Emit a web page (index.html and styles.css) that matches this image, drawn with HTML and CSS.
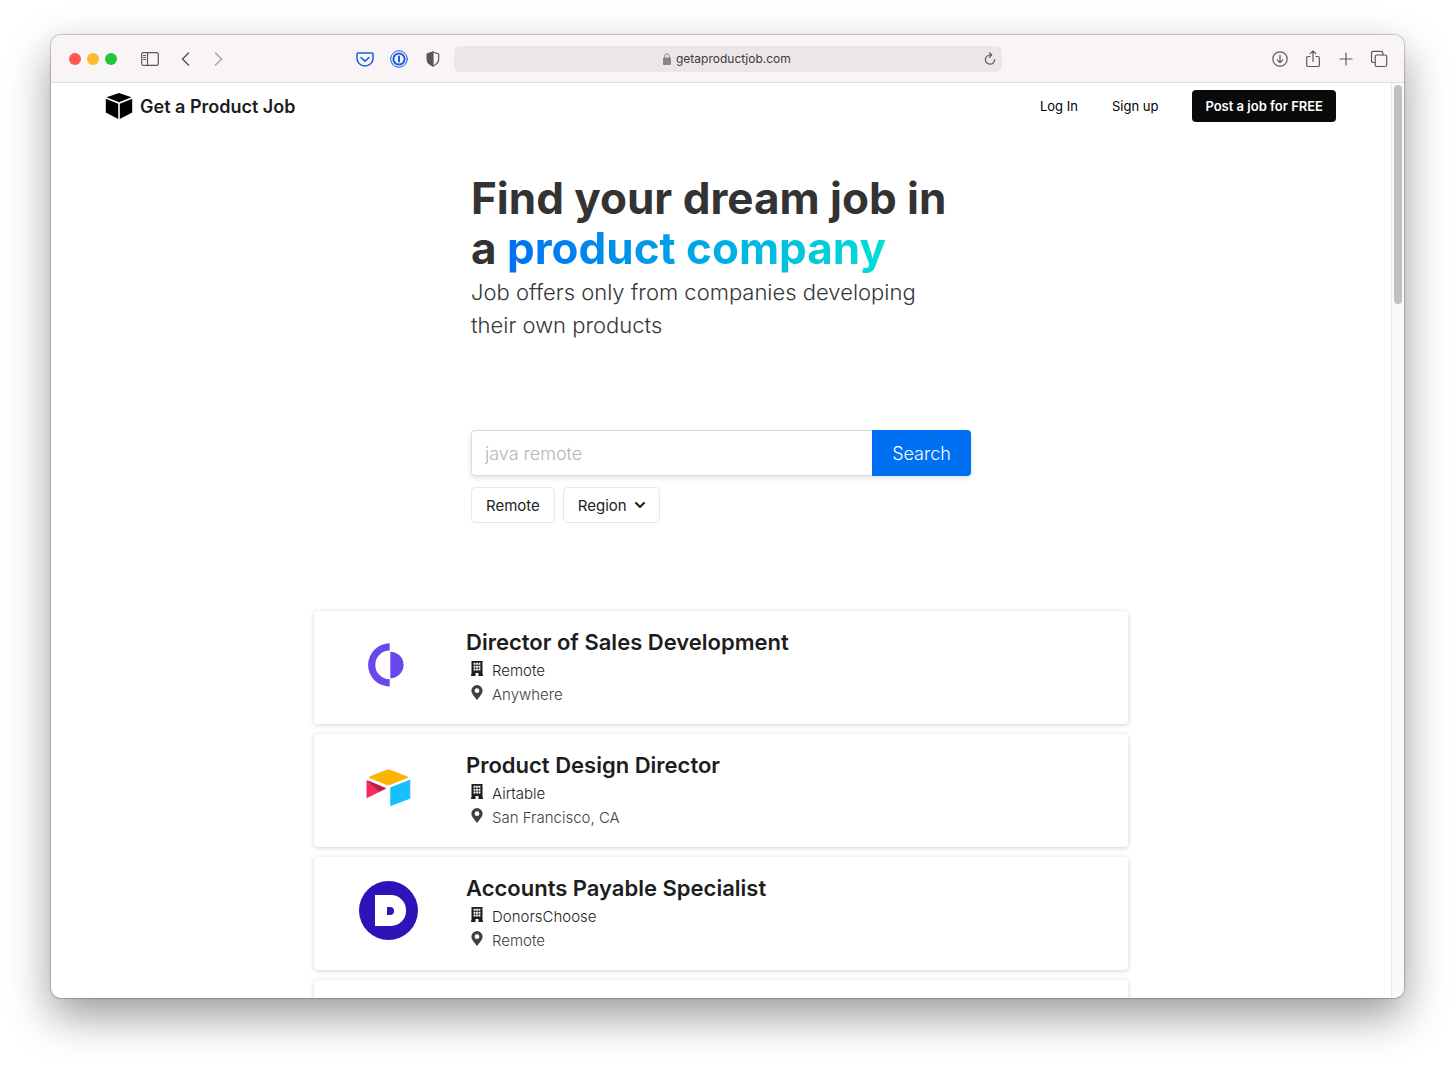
FILE: index.html
```html
<!DOCTYPE html>
<html lang="en">
<head>
  <meta charset="UTF-8">
  <meta name="viewport" content="width=device-width, initial-scale=1.0">
  <title>Get a Product Job</title>
  <link rel="stylesheet" href="styles.css">
</head>
<body>
  <svg class="sprite" aria-hidden="true">
    <symbol id="building" viewBox="0 0 12 15">
      <path fill-rule="evenodd" d="M.5 0h11v13.500h.5V15H7.500v-3h-3v3H0v-1.500h.5zM2.600 1.800v2h1.900v-2zM5.100 1.800v2h1.800v-2zM7.500 1.800v2h1.900v-2zM2.600 4.700v2h1.900v-2zM5.100 4.700v2h1.800v-2zM7.500 4.700v2h1.900v-2zM2.600 7.600v2h1.900v-2zM5.100 7.600v2h1.800v-2zM7.500 7.600v2h1.900v-2z"/>
    </symbol>
    <symbol id="pin" viewBox="0 0 12 15">
      <path fill-rule="evenodd" d="M6 0a5.600 5.600 0 0 1 5.600 5.600C11.600 8 10 10 6.500 14.500q-.5.600-1 0C2 10 .4 8 .4 5.600A5.600 5.600 0 0 1 6 0zM6 3.300a2.400 2.400 0 1 0 0 4.800 2.400 2.400 0 0 0 0-4.800z"/>
    </symbol>
  </svg>

  <div class="window">
    <header class="toolbar">
      <div class="toolbar-left">
        <div class="lights">
          <span class="light red"></span>
          <span class="light yellow"></span>
          <span class="light green"></span>
        </div>
        <button class="tool" aria-label="Sidebar">
          <svg width="18" height="14" viewBox="0 0 18 14"><rect x=".7" y=".7" width="16.600" height="12.600" rx="1.500"/><path d="M6.500 1v12M2.500 3.500h2M2.500 5.500h2M2.500 7.500h2"/></svg>
        </button>
        <div class="history">
          <button class="tool" aria-label="Back">
            <svg width="18" height="14" viewBox="0 0 18 14"><path d="M11.500 1l-6 6 6 6" stroke-width="1.500"/></svg>
          </button>
          <button class="tool faded" aria-label="Forward">
            <svg width="18" height="14" viewBox="0 0 18 14"><path d="M6.500 1l6 6-6 6" stroke-width="1.500"/></svg>
          </button>
        </div>
        <div class="extensions">
          <button class="tool blue" aria-label="Save to Pocket">
            <svg width="18" height="18" viewBox="0 0 18 18"><path d="M2 3h14q1 0 1 1v4.500a8 7.500 0 0 1-16 0V4q0-1 1-1z" stroke-width="1.500"/><path d="M5 7.500l4 3.700 4-3.700" stroke-width="1.600"/></svg>
          </button>
          <button class="tool blue" aria-label="Password manager">
            <svg width="18" height="18" viewBox="0 0 18 18"><circle cx="9" cy="9" r="8.300" stroke-width="1"/><circle cx="9" cy="9" r="5.600" stroke-width="2"/><path d="M9 6.500v5" stroke-width="2"/></svg>
          </button>
          <button class="tool" aria-label="Privacy report">
            <svg width="18" height="18" viewBox="0 0 18 18"><path d="M9 2l5.700 2v5.500Q14.500 13.500 9 16 3.500 13.500 3.300 9.500V4z"/><path class="solid" d="M9 2v14Q3.500 13.500 3.300 9.500V4z"/></svg>
          </button>
        </div>
      </div>
      <div class="address">
        <svg class="lock" width="8" height="12" viewBox="0 0 8 12"><rect x="0" y="5" width="8" height="6.500" rx="1"/><path d="M1.800 5.500V3a2.200 2.200 0 0 1 4.400 0v2.500"/></svg>
        <input class="url" type="text" aria-label="Address" value="getaproductjob.com">
        <button class="tool reload" aria-label="Reload">
          <svg width="12" height="14" viewBox="0 0 12 14"><path d="M10.600 7.500A4.600 4.600 0 1 1 6 3h1.500M5.300.8L7.700 3 5.300 5.400"/></svg>
        </button>
      </div>
      <div class="toolbar-right">
        <button class="tool" aria-label="Downloads">
          <svg width="18" height="18" viewBox="0 0 18 18"><circle cx="9" cy="9" r="7.200"/><path d="M9 5v7.500M6.200 9.800L9 12.600l2.800-2.800"/></svg>
        </button>
        <button class="tool" aria-label="Share">
          <svg width="18" height="18" viewBox="0 0 18 18"><path d="M6 6.500H4q-1.300 0-1.300 1.300v7.400q0 1.300 1.300 1.300h10q1.300 0 1.300-1.300V7.800q0-1.300-1.300-1.300h-2M9 11.500V1M6.300 3.600L9 .9l2.700 2.700"/></svg>
        </button>
        <button class="tool" aria-label="New tab">
          <svg width="18" height="18" viewBox="0 0 18 18"><path d="M9 3v12M3 9h12"/></svg>
        </button>
        <button class="tool" aria-label="Tab overview">
          <svg width="18" height="18" viewBox="0 0 18 18"><rect x="5.200" y="5" width="11.500" height="11.500" rx="1.800"/><path d="M5 12.500H3.200q-1.700 0-1.700-1.700V3q0-1.700 1.700-1.700h7.900q1.700 0 1.700 1.700v2"/></svg>
        </button>
      </div>
    </header>

    <div class="viewport">
      <div class="page">
        <nav class="nav">
          <a class="brand" href="#">
            <svg width="28" height="28" viewBox="0 0 28 28"><path d="M14 1l12.500 4.300L14 10.300 1.500 5.300zM.8 6.700l12.400 5V27L.8 20.600zM27.200 6.700l-12.400 5V27l12.400-6.400z"/></svg>
            <span>Get a Product Job</span>
          </a>
          <div class="nav-links">
            <a href="#">Log In</a>
            <a href="#">Sign up</a>
            <a class="post-job" href="#">Post a job for FREE</a>
          </div>
        </nav>

        <section class="hero">
          <h1>Find your dream job in<br>a <span class="gradient">product company</span></h1>
          <p>Job offers only from companies developing<br>their own products</p>
          <form class="search">
            <input type="text" placeholder="java remote" aria-label="Search jobs">
            <button type="button">Search</button>
          </form>
          <div class="filters">
            <button class="filter">Remote</button>
            <button class="filter">Region
              <svg width="10" height="8" viewBox="0 0 10 8"><path d="M1 2l4 4 4-4"/></svg>
            </button>
          </div>
        </section>

        <main class="jobs">
          <article class="job">
            <div class="logo">
              <svg width="60" height="60" viewBox="0 0 60 60" fill="#6847ec"><path d="M30.700 8.300v7.200a14.400 14.400 0 0 0 0 28.800v7.200a21.600 21.600 0 0 1 0-43.200z"/><path d="M31.300 16.700a13.200 13.200 0 0 1 0 26.500z"/></svg>
            </div>
            <div class="info">
              <h2>Director of Sales Development</h2>
              <p class="company"><svg width="12" height="15"><use href="#building"/></svg>Remote</p>
              <p class="place"><svg width="12" height="15"><use href="#pin"/></svg>Anywhere</p>
            </div>
          </article>
          <article class="job">
            <div class="logo">
              <svg width="60" height="60" viewBox="0 0 60 60" stroke-linejoin="round"><path fill="#fcb400" stroke="#fcb400" d="M10 19.300l18-7.200q1.300-.5 2.600 0l18.400 7.200-18.400 7.300q-1.300.5-2.600 0z"/><path fill="#f82b60" stroke="#f82b60" d="M8 22.800l18.500 7.600L8 39.500z"/><path fill="#ba1e45" d="M8.200 22.300L27 30.300l-7 3.300z"/><path fill="#18bfff" stroke="#18bfff" d="M31.800 29.700l19-7.400v18l-19 7.200z"/></svg>
            </div>
            <div class="info">
              <h2>Product Design Director</h2>
              <p class="company"><svg width="12" height="15"><use href="#building"/></svg>Airtable</p>
              <p class="place"><svg width="12" height="15"><use href="#pin"/></svg>San Francisco, CA</p>
            </div>
          </article>
          <article class="job">
            <div class="logo">
              <div class="donors"><div class="donors-mark"><div class="donors-hole"></div></div></div>
            </div>
            <div class="info">
              <h2>Accounts Payable Specialist</h2>
              <p class="company"><svg width="12" height="15"><use href="#building"/></svg>DonorsChoose</p>
              <p class="place"><svg width="12" height="15"><use href="#pin"/></svg>Remote</p>
            </div>
          </article>
          <article class="job"></article>
        </main>
      </div>
      <div class="scrollbar"><div class="thumb"></div></div>
    </div>
  </div>
</body>
</html>
```

FILE: styles.css
```css
* {
  box-sizing: border-box;
}

body {
  margin: 0;
  height: 100vh;
  padding: 35px 52px 68px 51px;
  background: #fff;
  color: #1d1d1d;
  font-family: Inter, sans-serif;
  overflow: hidden;
}

h1, h2, p {
  margin: 0;
}

a {
  color: inherit;
  text-decoration: none;
}

button, input {
  font-family: inherit;
}

button {
  cursor: pointer;
}

svg {
  display: block;
  flex-shrink: 0;
}

.sprite {
  display: none;
}

.window {
  height: 100%;
  display: flex;
  flex-direction: column;
  border-radius: 10px;
  overflow: hidden;
  background: #fff;
  box-shadow: 0 0 1px 1px rgba(0, 0, 0, 0.2), 0 18px 44px rgba(0, 0, 0, 0.4);
}

/* browser toolbar */

.toolbar {
  flex-shrink: 0;
  display: grid;
  grid-template-columns: 1fr 548px 1fr;
  align-items: center;
  height: 48px;
  background: #f9f5f6;
  border-bottom: 1px solid #e2dbdd;
}

.toolbar-left {
  display: flex;
  align-items: center;
  padding: 0 12px 0 18px;
}

.lights {
  display: flex;
  gap: 6px;
  margin-right: 24px;
}

.light {
  width: 12px;
  height: 12px;
  border-radius: 50%;
}

.red {
  background: #fe5850;
}

.yellow {
  background: #febc2e;
}

.green {
  background: #25c63c;
}

.tool {
  display: block;
  padding: 0;
  border: 0;
  background: none;
  color: #5b5759;
}

.tool svg {
  fill: none;
  stroke: currentColor;
  stroke-width: 1.2;
  stroke-linecap: round;
  stroke-linejoin: round;
}

.tool .solid {
  fill: currentColor;
}

.faded {
  color: #aaa6a8;
}

.blue {
  color: #1b5fe0;
}

.history {
  display: flex;
  gap: 14px;
  margin-left: 18px;
}

.extensions {
  display: flex;
  gap: 16px;
  margin-left: auto;
}

.address {
  position: relative;
  display: flex;
  align-items: center;
  justify-content: center;
  gap: 5px;
  height: 26px;
  border-radius: 6px;
  background: #ebe7e8;
}

.lock {
  fill: #8a8688;
  stroke: #8a8688;
}

.lock path {
  fill: none;
}

.url {
  width: 116px;
  padding: 0;
  border: 0;
  background: none;
  color: #3d3a3b;
  font-size: 12px;
  outline: none;
}

.reload {
  position: absolute;
  right: 6px;
}

.toolbar-right {
  display: flex;
  justify-content: flex-end;
  gap: 15px;
  padding-right: 16px;
}

/* page */

.viewport {
  flex: 1;
  min-height: 0;
  display: flex;
}

.page {
  flex: 1;
  overflow: hidden;
}

.scrollbar {
  width: 13px;
  padding: 2px 2px 0;
  background: #fafafa;
  border-left: 1px solid #e8e8e8;
}

.thumb {
  width: 8px;
  height: 24%;
  border-radius: 4px;
  background: #c1c1c1;
}

.nav {
  display: flex;
  align-items: center;
  justify-content: space-between;
  padding: 7px 55px 7px 54px;
}

.brand {
  display: flex;
  align-items: center;
  gap: 7px;
  font-size: 18px;
  font-weight: 600;
}

.brand svg {
  fill: #000;
}

.nav-links {
  display: flex;
  align-items: center;
  gap: 34px;
  color: #000;
  font-size: 13px;
}

.post-job {
  padding: 0 13px;
  border-radius: 4px;
  background: #0a0a0a;
  color: #fff;
  font-weight: 600;
  line-height: 32px;
}

.hero {
  max-width: 500px;
  margin: 0 auto;
  padding-top: 44px;
}

.hero h1 {
  color: #333;
  font-size: 44px;
  font-weight: 700;
  line-height: 50px;
  white-space: nowrap;
}

.gradient {
  background: linear-gradient(90deg, #0070f3, #00dfd8);
  -webkit-background-clip: text;
  background-clip: text;
  color: transparent;
}

.hero p {
  margin-top: 3px;
  color: #363636;
  font-size: 22px;
  font-weight: 350;
  line-height: 33px;
}

.search {
  display: flex;
  height: 46px;
  margin-top: 88px;
  border-radius: 4px;
  box-shadow: 0 2px 5px rgba(0, 0, 0, 0.12);
}

.search input {
  flex: 1;
  min-width: 0;
  padding: 0 13px;
  border: 1px solid #dbdbdb;
  border-right: 0;
  border-radius: 4px 0 0 4px;
  font-size: 18px;
  font-weight: 350;
}

.search input::placeholder {
  color: #b5b5b5;
}

.search button {
  width: 99px;
  padding: 0;
  border: 0;
  border-radius: 0 4px 4px 0;
  background: #0070f3;
  color: #fff;
  font-size: 18px;
  font-weight: 350;
}

.filters {
  display: flex;
  gap: 8px;
  margin-top: 11px;
}

.filter {
  display: flex;
  align-items: center;
  gap: 8px;
  height: 36px;
  padding: 0 14px;
  border: 1px solid #e8e8e8;
  border-radius: 4px;
  background: #fff;
  color: #1d1d1d;
  font-size: 15px;
}

.filter svg {
  fill: none;
  stroke: #1d1d1d;
  stroke-width: 2;
  stroke-linecap: round;
  stroke-linejoin: round;
}

.jobs {
  display: flex;
  flex-direction: column;
  gap: 10px;
  max-width: 814px;
  margin: 88px auto 0;
}

.job {
  display: flex;
  min-height: 113px;
  padding: 16px 0;
  border-radius: 4px;
  box-shadow: 0 1px 5px rgba(0, 0, 0, 0.18);
}

.logo {
  width: 152px;
  padding: 8px 0 0 45px;
}

.donors {
  display: flex;
  align-items: center;
  justify-content: center;
  width: 59px;
  height: 59px;
  border-radius: 50%;
  background: #2c14b8;
}

.donors-mark {
  display: flex;
  align-items: center;
  justify-content: center;
  width: 31px;
  height: 31px;
  margin-left: 4px;
  border-radius: 0 15px 15px 0;
  background: #fff;
}

.donors-hole {
  width: 7px;
  height: 8px;
  border-radius: 0 4px 4px 0;
  background: #2c14b8;
}

.info h2 {
  margin-bottom: 2px;
  color: #1d1d1d;
  font-size: 22px;
  font-weight: 600;
  line-height: 30px;
}

.info p {
  display: flex;
  gap: 9px;
  padding-left: 5px;
  font-size: 15px;
  font-weight: 350;
  line-height: 24px;
}

.info svg {
  margin-top: 2px;
  fill: currentColor;
}

.place {
  color: #404040;
}
```
